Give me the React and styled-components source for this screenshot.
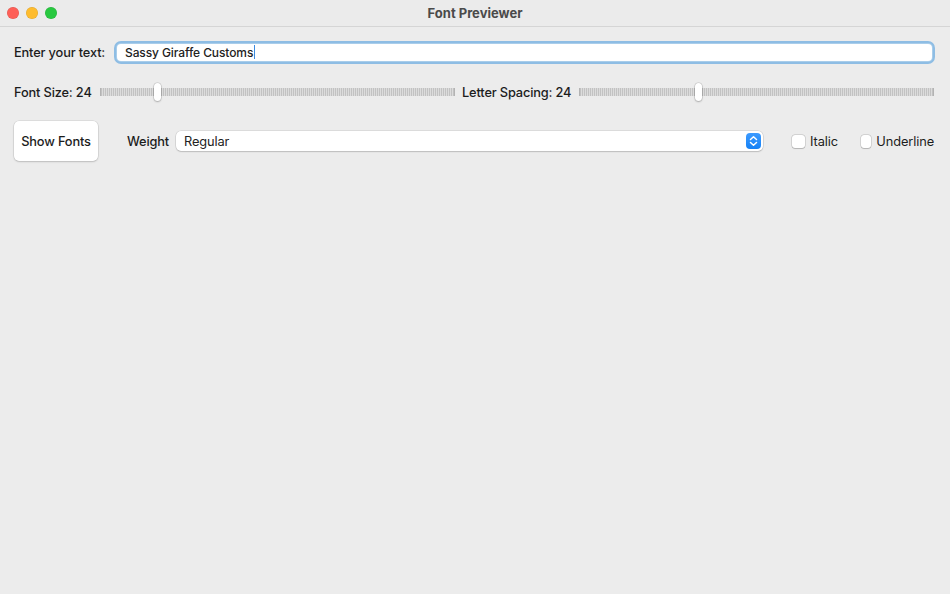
import React from 'react';
import styled, { createGlobalStyle } from 'styled-components';

const GlobalStyle = createGlobalStyle`
  html, body {
    margin: 0;
    padding: 0;
    background: #ececec;
  }
  body {
    font-family: Inter, "Noto Sans", "Liberation Sans", sans-serif;
    color: #1f1f1f;
  }
`;

const Window = styled.div`
  width: 950px;
  height: 594px;
  background: #ececec;
  overflow: hidden;
`;

const TitleBar = styled.div`
  height: 26px;
  display: flex;
  align-items: center;
  position: relative;
  border-bottom: 1px solid #d5d5d5;
  background: #ebebeb;
`;

const Lights = styled.div`
  display: flex;
  gap: 7px;
  padding-left: 7px;
`;

const Light = styled.span`
  width: 12px;
  height: 12px;
  border-radius: 50%;
  background: ${(p) => p.color};
  box-shadow: inset 0 0 0 0.5px rgba(0, 0, 0, 0.12);
`;

const Title = styled.div`
  position: absolute;
  left: 0;
  right: 0;
  text-align: center;
  font-size: 13px;
  font-weight: 700;
  color: #4a4a4a;
  pointer-events: none;
`;

const Content = styled.div`
  padding: 14px 16px 0 14px;
  display: flex;
  flex-direction: column;
`;

const InputRow = styled.div`
  display: grid;
  grid-template-columns: 103px 1fr;
  align-items: center;
  height: 22px;
`;

const SliderRow = styled.div`
  display: grid;
  grid-template-columns: 86px 1fr 124px 1fr;
  align-items: center;
  height: 20px;
  margin-top: 19px;
`;

const ControlRow = styled.div`
  display: flex;
  align-items: center;
  height: 40px;
  margin-top: 19px;
`;

const Label = styled.span`
  font-size: 12.8px;
  font-weight: 500;
  color: #1c1c1c;
  white-space: nowrap;
  letter-spacing: -0.15px;
  padding-left: ${(p) => p.pl || 0}px;
`;

const WeightLabel = styled(Label)`
  width: 49px;
  margin-left: 29px;
`;

const TextInput = styled.div`
  height: 17px;
  background: #fff;
  border-radius: 4px;
  margin-right: 2px;
  box-shadow: 0 0 0 1px #a9cdea, 0 0 0 3px #8ebde4;
  display: flex;
  align-items: center;
  padding-left: 8px;
  font-size: 12px;
  font-weight: 500;
  letter-spacing: -0.1px;
  color: #222;
`;

const Caret = styled.span`
  display: inline-block;
  width: 1px;
  height: 14px;
  background: #3d8be0;
  margin-left: 1px;
`;

const Slider = styled.div`
  position: relative;
  height: 20px;
  display: flex;
  align-items: center;
`;

const Track = styled.div`
  width: 100%;
  height: 8px;
  background: repeating-linear-gradient(
    to right,
    #c2c2c2 0px,
    #c2c2c2 1px,
    #dcdcdc 1px,
    #dcdcdc 2px
  );
  border-left: 1px solid #b3b3b3;
  border-right: 1px solid #b3b3b3;
`;

const Thumb = styled.div`
  position: absolute;
  top: 1px;
  width: 7px;
  height: 18px;
  margin-left: -3px;
  border-radius: 4px;
  background: #fff;
  box-shadow: 0 0 0 0.5px rgba(0, 0, 0, 0.18), 0 1px 2px rgba(0, 0, 0, 0.2);
`;

const Button = styled.button`
  width: 84px;
  height: 40px;
  flex-shrink: 0;
  margin: 0;
  border: none;
  border-radius: 5px;
  background: #fff;
  box-shadow: 0 0 0 0.5px rgba(0, 0, 0, 0.12), 0 1px 2px rgba(0, 0, 0, 0.15);
  font-family: inherit;
  font-size: 12.8px;
  font-weight: 500;
  letter-spacing: -0.15px;
  color: #1c1c1c;
  padding: 0;
`;

const Select = styled.div`
  flex: 1;
  height: 20px;
  background: #fff;
  border-radius: 5px;
  box-shadow: 0 0 0 0.5px rgba(0, 0, 0, 0.14), 0 1px 1.5px rgba(0, 0, 0, 0.14);
  display: flex;
  align-items: center;
  justify-content: space-between;
  padding: 0 2px 0 8px;
  font-size: 12.8px;
  letter-spacing: -0.1px;
  color: #222;
  margin-right: 29px;
`;

const Stepper = styled.span`
  width: 15px;
  height: 16px;
  border-radius: 4px;
  background: linear-gradient(#3d9bff, #1581f5);
  display: flex;
  align-items: center;
  justify-content: center;
`;

const Check = styled.label`
  display: flex;
  align-items: center;
  gap: 5px;
  width: ${(p) => p.w}px;
  flex-shrink: 0;
  font-size: 12.8px;
  letter-spacing: -0.1px;
  color: #1c1c1c;
`;

const Box = styled.span`
  width: 13px;
  height: 13px;
  border-radius: 3px;
  background: #fff;
  box-shadow: 0 0 0 0.5px rgba(0, 0, 0, 0.2), 0 0.5px 1px rgba(0, 0, 0, 0.15);
`;

const Chevrons = () => (
  <svg width="9" height="12" viewBox="0 0 9 12" fill="none">
    <path d="M1.5 4.5 L4.5 1.8 L7.5 4.5" stroke="#fff" strokeWidth="1.5" strokeLinecap="round" strokeLinejoin="round" />
    <path d="M1.5 7.5 L4.5 10.2 L7.5 7.5" stroke="#fff" strokeWidth="1.5" strokeLinecap="round" strokeLinejoin="round" />
  </svg>
);

const RangeSlider = ({ value }) => (
  <Slider>
    <Track />
    <Thumb style={{ left: `${value}%` }} />
  </Slider>
);

const App = () => {
  return (
    <Window>
      <GlobalStyle />
      <TitleBar>
        <Lights>
          <Light color="#fe5f57" />
          <Light color="#febc2e" />
          <Light color="#28c840" />
        </Lights>
        <Title>Font Previewer</Title>
      </TitleBar>
      <Content>
        <InputRow>
          <Label>Enter your text:</Label>
          <TextInput>
            Sassy Giraffe Customs<Caret />
          </TextInput>
        </InputRow>
        <SliderRow>
          <Label>Font Size: 24</Label>
          <RangeSlider value={16} />
          <Label pl={7}>Letter Spacing: 24</Label>
          <RangeSlider value={33.5} />
        </SliderRow>
        <ControlRow>
          <Button>Show Fonts</Button>
          <WeightLabel>Weight</WeightLabel>
          <Select>
            Regular
            <Stepper>
              <Chevrons />
            </Stepper>
          </Select>
          <Check w={69}>
            <Box />
            Italic
          </Check>
          <Check w={73}>
            <Box />
            Underline
          </Check>
        </ControlRow>
      </Content>
    </Window>
  );
};

export default App;
